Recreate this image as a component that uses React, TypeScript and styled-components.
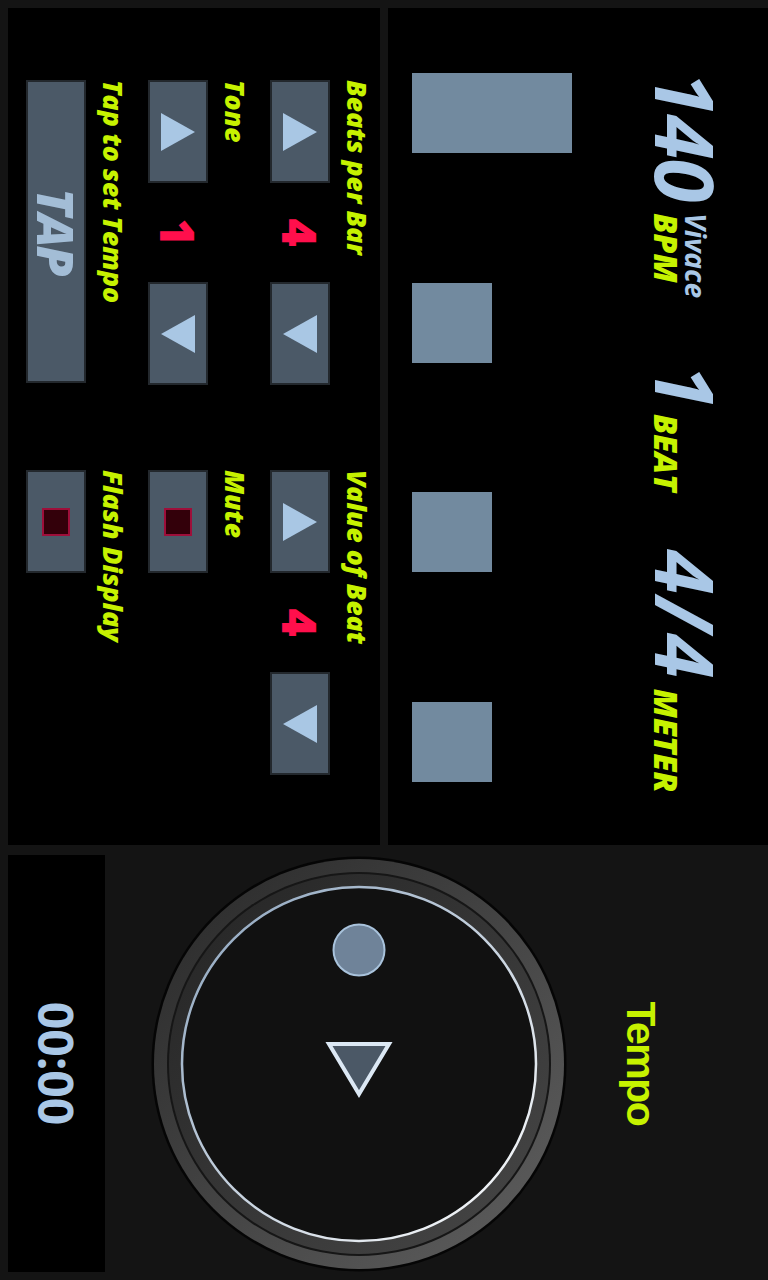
import { createGlobalStyle, styled } from "styled-components";

const GlobalStyle = createGlobalStyle`
    html, body {
        margin: 0;
        padding: 0;
        background: #141414;
        overflow: hidden;
    }
    #root {
        width: 768px;
        height: 1280px;
    }
`;

const Screen = styled.div`
    width: 768px;
    height: 1280px;
    overflow: hidden;
    background: #141414;
`;

// the app is a landscape page, shown turned a quarter clockwise
const Landscape = styled.div`
    width: 1280px;
    height: 768px;
    box-sizing: border-box;
    padding: 0 8px 8px 8px;
    display: grid;
    grid-template-columns: 837px 417px;
    column-gap: 10px;
    transform-origin: 0 0;
    transform: translateX(768px) rotate(90deg);
    font-family: "Open Sans", "Noto Sans", sans-serif;
`;

const LeftColumn = styled.div`
    display: flex;
    flex-direction: column;
    gap: 8px;
`;

const DisplayPanel = styled.section`
    height: 380px;
    background: #000;
    display: flex;
    flex-direction: column;
`;

const StatsRow = styled.div`
    display: grid;
    grid-template-columns: 293px 185px auto;
    padding: 42px 0 0 64px;
`;

const Stat = styled.div<{ $gap: number }>`
    display: flex;
    align-items: flex-end;
    gap: ${(p) => p.$gap}px;
`;

const BigNumber = styled.span<{ $spacing?: number }>`
    font-size: 80px;
    line-height: 80px;
    font-weight: 700;
    font-style: italic;
    color: #a9c7e6;
    letter-spacing: ${(p) => p.$spacing ?? -1}px;
`;

const SideLabels = styled.div`
    display: flex;
    flex-direction: column;
    padding-bottom: 5px;
`;

const Tempo = styled.span`
    font-size: 28px;
    line-height: 27px;
    font-weight: 700;
    font-style: italic;
    color: #a9c7e6;
`;

const Unit = styled.span`
    font-size: 32px;
    line-height: 31px;
    font-weight: 800;
    font-style: italic;
    color: #c6f200;
`;

const BeatsRow = styled.div`
    margin-top: auto;
    display: grid;
    grid-template-columns: repeat(4, 80px);
    column-gap: 129.5px;
    align-items: end;
    padding: 0 0 24px 65px;
`;

const BeatBlock = styled.div<{ $accent: boolean }>`
    width: 80px;
    height: ${(p) => (p.$accent ? 160 : 80)}px;
    background: #728a9f;
`;

const ControlsPanel = styled.section`
    height: 372px;
    box-sizing: border-box;
    background: #000;
    padding: 6px 0 0 72px;
    display: grid;
    grid-template-columns: 305px 305px;
    column-gap: 85px;
    align-content: start;
`;

const FieldColumn = styled.div`
    display: flex;
    flex-direction: column;
    gap: 18px;
`;

const Field = styled.div`
    display: flex;
    flex-direction: column;
`;

const FieldLabel = styled.span`
    font-size: 26.5px;
    line-height: 35px;
    margin-bottom: 9px;
    font-weight: 800;
    font-style: italic;
    color: #c6f200;
    white-space: nowrap;
`;

const Stepper = styled.div`
    display: flex;
    align-items: center;
    width: 305px;
`;

const PadButton = styled.button<{ $wide?: boolean }>`
    width: ${(p) => (p.$wide ? 303 : 103)}px;
    height: 60px;
    box-sizing: border-box;
    padding: 0;
    border: 2px solid #23282d;
    background: #4b5967;
    display: flex;
    align-items: center;
    justify-content: center;
    cursor: pointer;
`;

const StepValue = styled.span`
    flex: 1;
    text-align: center;
    font-size: 48px;
    line-height: 60px;
    font-weight: 800;
    color: #ff0f4c;
`;

const TapText = styled.span`
    font-family: "Open Sans", "Noto Sans", sans-serif;
    font-size: 50px;
    font-weight: 800;
    font-style: italic;
    letter-spacing: -2px;
    color: #a3bdd6;
`;

const CheckMark = styled.span`
    width: 28px;
    height: 28px;
    box-sizing: border-box;
    background: #33000a;
    border: 2px solid #9e0f3a;
`;

const RightColumn = styled.div`
    display: flex;
    flex-direction: column;
    align-items: center;
`;

const DialTitle = styled.span`
    margin-top: 107px;
    font-family: "Liberation Sans", Arial, sans-serif;
    font-size: 41px;
    line-height: 40px;
    font-weight: 700;
    letter-spacing: -1.5px;
    color: #c6f200;
`;

const DialWrap = styled.div`
    margin-top: 54px;
    width: 416px;
    height: 416px;
`;

const TimerPanel = styled.div`
    margin-top: auto;
    width: 417px;
    height: 97px;
    background: #000;
    display: flex;
    align-items: center;
    justify-content: center;
`;

const TimerText = styled.span`
    font-size: 48px;
    font-weight: 700;
    color: #a9c7e6;
`;

function Arrow({ dir }: { dir: "up" | "down" }) {
    return (
        <svg width="38" height="34" viewBox="0 0 38 34">
            <polygon points={dir === "up" ? "19,0 38,34 0,34" : "0,0 38,0 19,34"} fill="#a9c7e4" />
        </svg>
    );
}

function StepperField({ label, value }: { label: string; value: number }) {
    return (
        <Field>
            <FieldLabel>{label}</FieldLabel>
            <Stepper>
                <PadButton aria-label="increase">
                    <Arrow dir="up" />
                </PadButton>
                <StepValue>{value}</StepValue>
                <PadButton aria-label="decrease">
                    <Arrow dir="down" />
                </PadButton>
            </Stepper>
        </Field>
    );
}

function CheckField({ label }: { label: string }) {
    return (
        <Field>
            <FieldLabel>{label}</FieldLabel>
            <PadButton aria-label={label}>
                <CheckMark />
            </PadButton>
        </Field>
    );
}

function Dial() {
    return (
        <svg width="416" height="416" viewBox="0 0 416 416">
            <defs>
                <linearGradient id="ringOuter" x1="0" y1="1" x2="1" y2="0">
                    <stop offset="0" stopColor="#282828" />
                    <stop offset="1" stopColor="#606060" />
                </linearGradient>
                <linearGradient id="ringInner" x1="0" y1="1" x2="1" y2="0">
                    <stop offset="0" stopColor="#242424" />
                    <stop offset="1" stopColor="#474747" />
                </linearGradient>
                <linearGradient id="rim" x1="0" y1="1" x2="1" y2="0">
                    <stop offset="0" stopColor="#8aa2bc" />
                    <stop offset="1" stopColor="#ffffff" />
                </linearGradient>
            </defs>
            <circle cx="208" cy="208" r="207.5" fill="#050505" />
            <circle cx="208" cy="208" r="205" fill="url(#ringOuter)" />
            <circle cx="208" cy="208" r="192" fill="#161616" />
            <circle cx="208" cy="208" r="190" fill="url(#ringInner)" />
            <circle cx="208" cy="208" r="177" fill="#111" stroke="url(#rim)" strokeWidth="2.5" />
            <circle cx="94" cy="208" r="25.5" fill="#6f8399" stroke="#a9c3dc" strokeWidth="2" />
            <polygon
                points="188,178 238,208 188,238"
                fill="#4b5866"
                stroke="#dce8f4"
                strokeWidth="4"
                strokeLinejoin="miter"
            />
        </svg>
    );
}

const beats = [true, false, false, false];

export default function App() {
    return (
        <>
            <GlobalStyle />
            <Screen>
                <Landscape>
                    <LeftColumn>
                        <DisplayPanel>
                            <StatsRow>
                                <Stat $gap={12}>
                                    <BigNumber>140</BigNumber>
                                    <SideLabels>
                                        <Tempo>Vivace</Tempo>
                                        <Unit>BPM</Unit>
                                    </SideLabels>
                                </Stat>
                                <Stat $gap={6}>
                                    <BigNumber>1</BigNumber>
                                    <SideLabels>
                                        <Unit>BEAT</Unit>
                                    </SideLabels>
                                </Stat>
                                <Stat $gap={8}>
                                    <BigNumber $spacing={3}>4/4</BigNumber>
                                    <SideLabels>
                                        <Unit>METER</Unit>
                                    </SideLabels>
                                </Stat>
                            </StatsRow>
                            <BeatsRow>
                                {beats.map((accent, i) => (
                                    <BeatBlock key={i} $accent={accent} />
                                ))}
                            </BeatsRow>
                        </DisplayPanel>
                        <ControlsPanel>
                            <FieldColumn>
                                <StepperField label="Beats per Bar" value={4} />
                                <StepperField label="Tone" value={1} />
                                <Field>
                                    <FieldLabel>Tap to set Tempo</FieldLabel>
                                    <PadButton $wide>
                                        <TapText>TAP</TapText>
                                    </PadButton>
                                </Field>
                            </FieldColumn>
                            <FieldColumn>
                                <StepperField label="Value of Beat" value={4} />
                                <CheckField label="Mute" />
                                <CheckField label="Flash Display" />
                            </FieldColumn>
                        </ControlsPanel>
                    </LeftColumn>
                    <RightColumn>
                        <DialTitle>Tempo</DialTitle>
                        <DialWrap>
                            <Dial />
                        </DialWrap>
                        <TimerPanel>
                            <TimerText>00:00</TimerText>
                        </TimerPanel>
                    </RightColumn>
                </Landscape>
            </Screen>
        </>
    );
}
